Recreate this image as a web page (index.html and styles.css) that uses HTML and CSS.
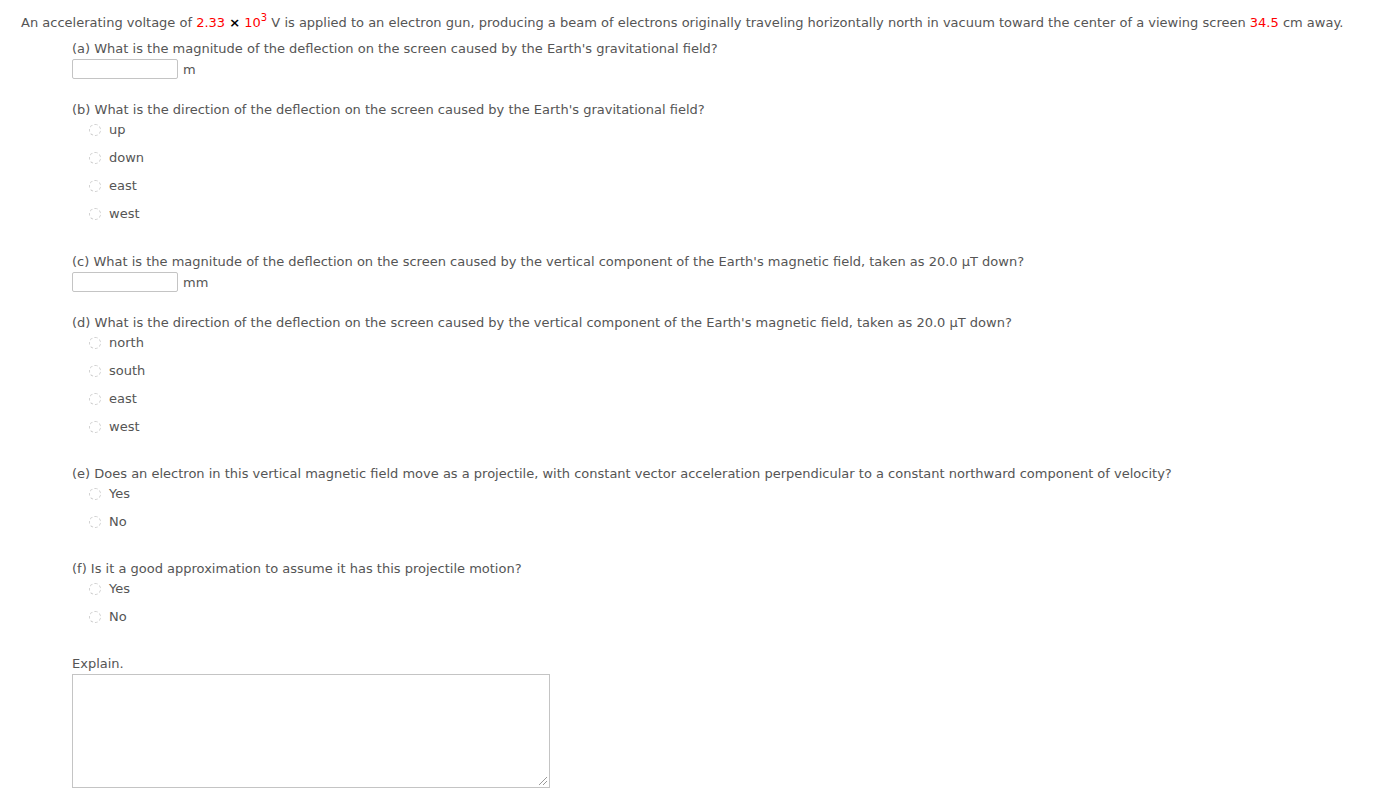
FILE: index.html
```html
<!DOCTYPE html>
<html>
<head>
<meta charset="utf-8">
<link rel="stylesheet" href="styles.css">
</head>
<body>
<div class="page">
  <p class="intro">An accelerating voltage of <span class="val">2.33</span> <span class="times">×</span> <span class="val">10<sup>3</sup></span> V is applied to an electron gun, producing a beam of electrons originally traveling horizontally north in vacuum toward the center of a viewing screen <span class="val">34.5</span> cm away.</p>
  <div class="parts">
    <div class="part">
      <p class="q">(a) What is the magnitude of the deflection on the screen caused by the Earth's gravitational field?</p>
      <div class="answer"><span class="box"></span><span class="unit">m</span></div>
    </div>
    <div class="part">
      <p class="q">(b) What is the direction of the deflection on the screen caused by the Earth's gravitational field?</p>
      <ul class="opts">
        <li><span class="radio"></span>up</li>
        <li><span class="radio"></span>down</li>
        <li><span class="radio"></span>east</li>
        <li><span class="radio"></span>west</li>
      </ul>
    </div>
    <div class="part">
      <p class="q">(c) What is the magnitude of the deflection on the screen caused by the vertical component of the Earth's magnetic field, taken as 20.0 μT down?</p>
      <div class="answer"><span class="box"></span><span class="unit">mm</span></div>
    </div>
    <div class="part part-tight">
      <p class="q">(d) What is the direction of the deflection on the screen caused by the vertical component of the Earth's magnetic field, taken as 20.0 μT down?</p>
      <ul class="opts">
        <li><span class="radio"></span>north</li>
        <li><span class="radio"></span>south</li>
        <li><span class="radio"></span>east</li>
        <li><span class="radio"></span>west</li>
      </ul>
    </div>
    <div class="part part-tight">
      <p class="q">(e) Does an electron in this vertical magnetic field move as a projectile, with constant vector acceleration perpendicular to a constant northward component of velocity?</p>
      <ul class="opts">
        <li><span class="radio"></span>Yes</li>
        <li><span class="radio"></span>No</li>
      </ul>
    </div>
    <div class="part part-tight">
      <p class="q">(f) Is it a good approximation to assume it has this projectile motion?</p>
      <ul class="opts">
        <li><span class="radio"></span>Yes</li>
        <li><span class="radio"></span>No</li>
      </ul>
    </div>
    <div class="part">
      <p class="q">Explain.</p>
      <div class="textarea"><span class="grip"></span></div>
    </div>
  </div>
</div>
</body>
</html>
```

FILE: styles.css
```css
html, body {
  margin: 0;
  padding: 0;
  background: #fff;
}
body {
  font-family: "DejaVu Sans", Verdana, sans-serif;
  font-size: 13px;
  color: #555;
}
.page {
  padding: 14px 0 0 21px;
}
p {
  margin: 0;
  line-height: 18px;
}
.intro {
  line-height: 18px;
  margin-bottom: 8px;
}
.val {
  color: #f00;
}
.times {
  color: #000;
  font-weight: bold;
}
sup {
  font-size: 10px;
  line-height: 0;
  vertical-align: 6px;
}
.parts {
  margin-left: 51px;
}
.part {
  margin-bottom: 22px;
}
.part:has(.opts) {
  margin-bottom: 30px;
}
.part.part-tight {
  margin-bottom: 29px;
}
.answer {
  display: flex;
  align-items: center;
  gap: 5px;
  margin-top: 1px;
}
.box {
  display: block;
  width: 104px;
  height: 18px;
  border: 1px solid #c4c4c4;
  border-radius: 2px;
}
.unit {
  color: #555;
}
.opts {
  list-style: none;
  margin: 2px 0 0 0;
  padding: 0 0 0 17px;
  display: flex;
  flex-direction: column;
  gap: 10px;
}
.opts li {
  display: flex;
  align-items: center;
  gap: 8px;
  line-height: 18px;
}
.radio {
  display: block;
  width: 10px;
  height: 10px;
  border: 1px dashed #cfcfcf;
  border-radius: 50%;
}
.textarea {
  position: relative;
  margin-top: 1px;
  width: 476px;
  height: 112px;
  border: 1px solid #c4c4c4;
}
.grip {
  position: absolute;
  right: 2px;
  bottom: 2px;
  width: 8px;
  height: 8px;
  background: linear-gradient(135deg, transparent 45%, #999 45%, #999 55%, transparent 55%, transparent 70%, #999 70%, #999 80%, transparent 80%);
}
```
